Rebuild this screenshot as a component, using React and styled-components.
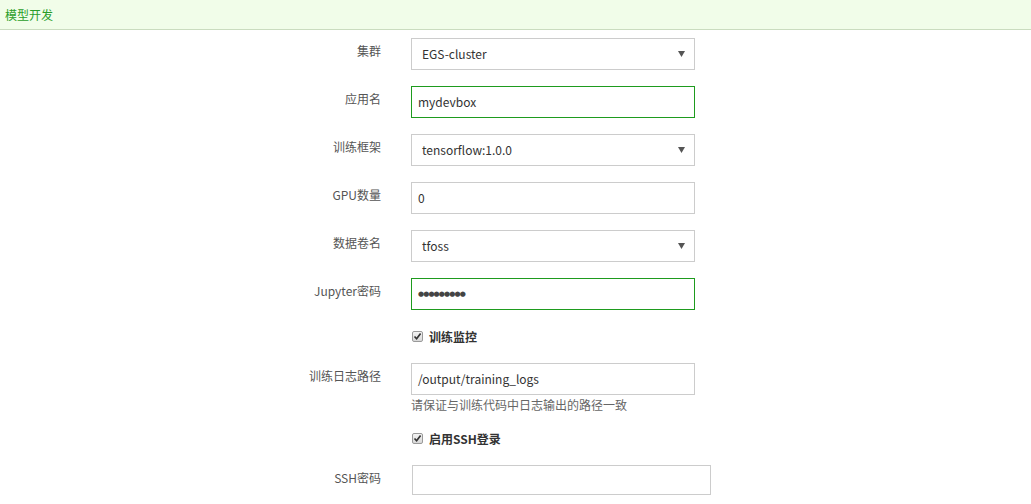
import styled, { createGlobalStyle } from "styled-components";

const GlobalStyle = createGlobalStyle`
  html, body {
    margin: 0;
    padding: 0;
    background: #fff;
    font-family: "Noto Sans CJK SC", "Noto Sans", sans-serif;
    font-size: 12px;
    color: #333;
  }
`;

const Page = styled.div`
  width: 1031px;
  min-height: 504px;
  background: #fff;
`;

const Header = styled.div`
  height: 29px;
  display: flex;
  align-items: center;
  padding-left: 5px;
  background-color: #f1fde9;
  border-bottom: 1px solid #cadcbf;
  color: #2a9d2a;
  font-size: 12px;
`;

const Form = styled.div`
  padding-top: 8px;
  display: flex;
  flex-direction: column;
`;

const Row = styled.div`
  display: grid;
  grid-template-columns: 381px 1fr;
  column-gap: 30px;
  align-items: start;
  margin-bottom: ${(props) => props.$gap ?? 16}px;
`;

const Label = styled.div`
  text-align: right;
  padding-top: 4px;
  line-height: 18px;
  color: #555;
  white-space: nowrap;
`;

const Field = styled.div`
  display: flex;
  flex-direction: column;
`;

const Box = styled.div`
  box-sizing: border-box;
  width: ${(props) => (props.$wide ? 299 : 284)}px;
  height: ${(props) => (props.$wide ? 30 : 32)}px;
  margin-left: ${(props) => (props.$wide ? 1 : 0)}px;
  border: 1px solid ${(props) => (props.$focus ? "#1e9b1e" : "#cccccc")};
  background: #fff;
  display: flex;
  align-items: center;
  padding-left: ${(props) => (props.$select ? 10 : 6)}px;
  padding-right: 9px;
  color: #333;
  font-size: 12px;
  line-height: 18px;
`;

const Value = styled.span`
  flex: 1;
`;

const Dots = styled.span`
  flex: 1;
  font-family: "DejaVu Sans", sans-serif;
  font-size: 7px;
  letter-spacing: -0.9px;
  color: #444;
`;

const Arrow = styled.svg`
  width: 7px;
  height: 6px;
  fill: #555;
`;

const Hint = styled.div`
  margin-top: 1px;
  line-height: 18px;
  color: #666;
`;

const CheckLine = styled.label`
  display: flex;
  align-items: center;
  gap: 6px;
  height: 20px;
  margin-left: 1px;
  font-weight: bold;
  color: #333;
`;

const CheckBox = styled.span`
  box-sizing: border-box;
  width: 11px;
  height: 11px;
  border: 1px solid #9a9a9a;
  border-radius: 2px;
  background: linear-gradient(#f4f4f4, #d8d8d8);
  display: flex;
  align-items: center;
  justify-content: center;

  & svg {
    width: 9px;
    height: 9px;
  }
`;

function Select({ value }) {
  return (
    <Box $select>
      <Value>{value}</Value>
      <Arrow viewBox="0 0 7 6">
        <path d="M0 0 H7 L3.5 6 Z" />
      </Arrow>
    </Box>
  );
}

function Check({ children }) {
  return (
    <CheckLine>
      <CheckBox>
        <svg viewBox="0 0 9 9">
          <path
            d="M1.5 4.5 L3.6 6.8 L7.6 1.6"
            fill="none"
            stroke="#333"
            strokeWidth="1.7"
          />
        </svg>
      </CheckBox>
      {children}
    </CheckLine>
  );
}

export default function App() {
  return (
    <>
      <GlobalStyle />
      <Page>
        <Header>模型开发</Header>
        <Form>
          <Row>
            <Label>集群</Label>
            <Select value="EGS-cluster" />
          </Row>
          <Row>
            <Label>应用名</Label>
            <Box $focus>
              <Value>mydevbox</Value>
            </Box>
          </Row>
          <Row>
            <Label>训练框架</Label>
            <Select value="tensorflow:1.0.0" />
          </Row>
          <Row>
            <Label>GPU数量</Label>
            <Box>
              <Value>0</Value>
            </Box>
          </Row>
          <Row>
            <Label>数据卷名</Label>
            <Select value="tfoss" />
          </Row>
          <Row>
            <Label>Jupyter密码</Label>
            <Box $focus>
              <Dots>●●●●●●●●●</Dots>
            </Box>
          </Row>
          <Row $gap={17}>
            <div />
            <Check>训练监控</Check>
          </Row>
          <Row $gap={14}>
            <Label>训练日志路径</Label>
            <Field>
              <Box>
                <Value>/output/training_logs</Value>
              </Box>
              <Hint>请保证与训练代码中日志输出的路径一致</Hint>
            </Field>
          </Row>
          <Row $gap={17}>
            <div />
            <Check>启用SSH登录</Check>
          </Row>
          <Row>
            <Label>SSH密码</Label>
            <Box $wide />
          </Row>
        </Form>
      </Page>
    </>
  );
}
